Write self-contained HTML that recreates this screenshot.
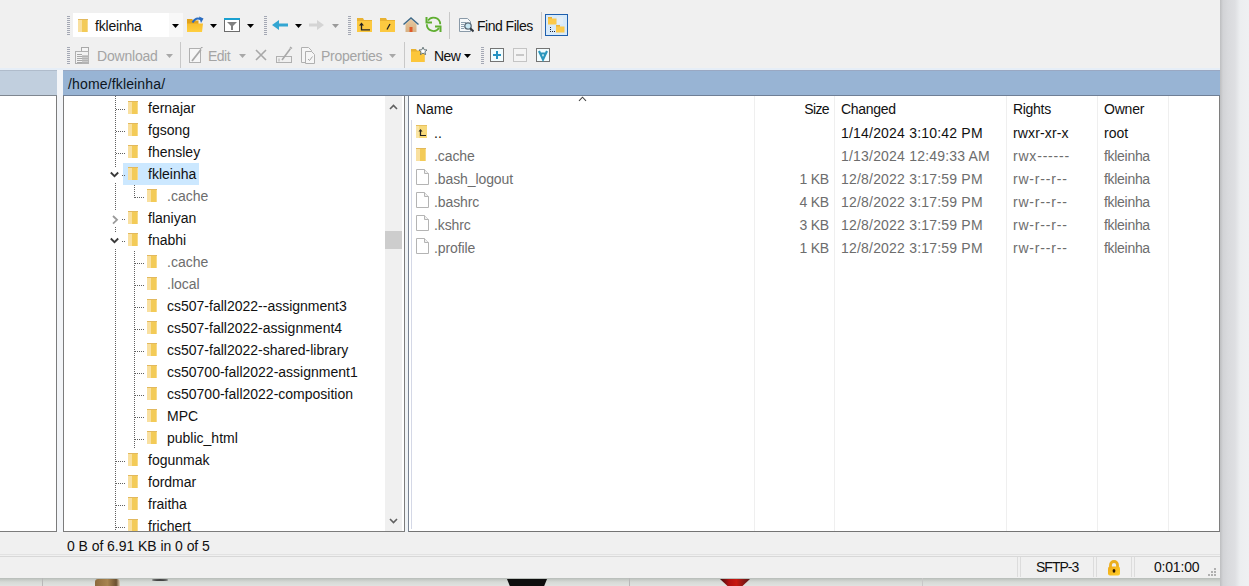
<!DOCTYPE html>
<html><head><meta charset="utf-8"><style>
html,body{margin:0;padding:0}
body{width:1249px;height:586px;position:relative;overflow:hidden;background:#eef0f2;font-family:"Liberation Sans",sans-serif;font-size:14px}
.t{position:absolute;white-space:pre;line-height:16px;font-family:"Liberation Sans",sans-serif}
.b{position:absolute;display:block}
.dv{position:absolute;width:1px;background:repeating-linear-gradient(to bottom,#606060 0 1px,transparent 1px 2px)}
.dh{position:absolute;height:1px;background:repeating-linear-gradient(to right,#606060 0 1px,transparent 1px 2px)}
</style></head><body>

<div class="b" style="left:0px;top:578px;width:1249px;height:8px;background:linear-gradient(to bottom,#b6bcb8,#c8ccc8 2px,#d6dad6 4px,#e0e2e0 8px)"></div>
<div class="b" style="left:1220px;top:0px;width:29px;height:586px;background:linear-gradient(to right,#bdbec0 0,#d2d3d6 3px,#d9dadd 8px,#dedfe2 15px,#eceef0 20px,#eff0f2 29px)"></div>
<div class="b" style="left:42px;top:578px;width:1px;height:8px;background:#b8b8b8"></div>
<div class="b" style="left:629px;top:578px;width:1px;height:8px;background:#b8b8b8"></div>
<div class="b" style="left:922px;top:578px;width:1px;height:8px;background:#c8c8c8"></div>
<div class="b" style="left:95px;top:579px;width:25px;height:7px;background:linear-gradient(to right,#8c6a3c,#a88450 50%,#6a5030 85%,#e0d0b8);border-radius:3px 3px 0 0"></div>
<div class="b" style="left:152px;top:579px;width:16px;height:2px;background:#444;border-radius:50%"></div>
<div class="b" style="left:507px;top:579px;width:40px;height:7px;background:#0e0e0e;clip-path:polygon(0 0,100% 0,93% 100%,7% 100%)"></div>
<div class="b" style="left:720px;top:579px;width:30px;height:7px;background:linear-gradient(to right,#3a1010,#b01010 30%,#c81810 55%,#501818);clip-path:polygon(0 0,100% 0,75% 100%,25% 100%)"></div>
<div class="b" style="left:0px;top:0px;width:1220px;height:578px;background:#f0f0f0"></div>
<div class="b" style="left:57px;top:68px;width:6px;height:464px;background:#f3f5f8"></div>
<div class="b" style="left:67px;top:16px;width:3px;height:20px;background:repeating-linear-gradient(to bottom,#a4a8b4 0 1px,transparent 1px 2px)"></div>
<div class="b" style="left:73px;top:13px;width:96px;height:24px;background:#fff"></div>
<div class="b" style="left:169px;top:13px;width:14px;height:24px;background:#f8f8f8"></div>
<svg class="b" style="left:78px;top:19px" width="10" height="13" viewBox="0 0 10 13"><rect x="0" y="0" width="10" height="13" fill="#f6d679"/><rect x="0" y="1" width="4" height="12" fill="#f9e0a0"/><rect x="4" y="1" width="5" height="12" fill="#f3cb58"/><rect x="9" y="1" width="1" height="12" fill="#f7da88"/><rect x="0" y="0" width="10" height="1" fill="#e2b95e"/></svg>
<div class="t" style="left:95px;top:18px;color:#111;font-size:14px;letter-spacing:-0.2px;">fkleinha</div>
<svg class="b" style="left:172px;top:24px" width="7" height="4" viewBox="0 0 7 4"><polygon points="0,0 7,0 3.5,4" fill="#000"/></svg>
<svg class="b" style="left:186px;top:16px" width="18" height="16" viewBox="0 0 18 16"><defs><linearGradient id="gof" x1="0" y1="0" x2="0" y2="1"><stop offset="0" stop-color="#f7bd2c"/><stop offset="1" stop-color="#ffcf40"/></linearGradient></defs><path d="M1 3 h5 l1.5 1.5 h5 v11.5 h-11.5z" fill="#e2a31c"/><path d="M1 7.5 h16 l-1 8.5 h-15z" fill="url(#gof)"/><path d="M6.5 6.5 Q10 0.5 15 3.5" stroke="#2a6cc0" stroke-width="2" fill="none"/><polygon points="13,0.5 17.5,2.5 15,7" fill="#2a6cc0"/></svg>
<svg class="b" style="left:210px;top:24px" width="7" height="4" viewBox="0 0 7 4"><polygon points="0,0 7,0 3.5,4" fill="#000"/></svg>
<svg class="b" style="left:223px;top:17px" width="18" height="15" viewBox="0 0 18 15"><rect x="1.5" y="1.5" width="15" height="13" fill="#fff" stroke="#6c6c6c"/><rect x="1" y="1" width="16" height="2" fill="#1aa0d0"/><path d="M4 5 h10 l-4 4 v4 h-2 v-4z" fill="#808080"/></svg>
<svg class="b" style="left:247px;top:24px" width="7" height="4" viewBox="0 0 7 4"><polygon points="0,0 7,0 3.5,4" fill="#000"/></svg>
<div class="b" style="left:264px;top:16px;width:3px;height:20px;background:repeating-linear-gradient(to bottom,#a4a8b4 0 1px,transparent 1px 2px)"></div>
<svg class="b" style="left:272px;top:20px" width="16" height="10" viewBox="0 0 16 10"><polygon points="0,5 7,0 7,3.5 16,3.5 16,6.5 7,6.5 7,10" fill="#33a6d2"/></svg>
<svg class="b" style="left:295px;top:24px" width="7" height="4" viewBox="0 0 7 4"><polygon points="0,0 7,0 3.5,4" fill="#000"/></svg>
<svg class="b" style="left:309px;top:20px" width="15" height="10" viewBox="0 0 15 10"><polygon points="15,5 8,0 8,3.5 0,3.5 0,6.5 8,6.5 8,10" fill="#d4d4d4"/></svg>
<svg class="b" style="left:332px;top:24px" width="7" height="4" viewBox="0 0 7 4"><polygon points="0,0 7,0 3.5,4" fill="#9a9a9a"/></svg>
<div class="b" style="left:348px;top:16px;width:3px;height:20px;background:repeating-linear-gradient(to bottom,#a4a8b4 0 1px,transparent 1px 2px)"></div>
<svg class="b" style="left:357px;top:18px" width="15" height="14" viewBox="0 0 15 14"><path d="M0 0 h6 l1 2 h8 v12 h-15z" fill="#e9b231"/><rect x="0" y="3" width="15" height="11" fill="#fcc940"/><path d="M4.5 6 v5.8 h8.5" stroke="#222" stroke-width="1.3" fill="none"/><polygon points="2,7.5 4.5,4.5 7,7.5" fill="#222"/></svg>
<svg class="b" style="left:380px;top:18px" width="15" height="14" viewBox="0 0 15 14"><path d="M0 0 h6 l1 2 h8 v12 h-15z" fill="#e9b231"/><rect x="0" y="3" width="15" height="11" fill="#fcc940"/><path d="M7 11.5 L10 6" stroke="#222" stroke-width="1.3"/></svg>
<svg class="b" style="left:403px;top:17px" width="16" height="15" viewBox="0 0 16 15"><defs><linearGradient id="ghm" x1="0" y1="0" x2="0" y2="1"><stop offset="0" stop-color="#e9c9a0"/><stop offset="1" stop-color="#d7b183"/></linearGradient></defs><polygon points="2.5,7 8,2 13.5,7 13.5,15 2.5,15" fill="url(#ghm)"/><path d="M0.5 7.5 L8 1 L15.5 7.5" stroke="#3f6a88" stroke-width="1.5" fill="none"/><rect x="6.5" y="10" width="3" height="5" fill="#e05a2a"/></svg>
<svg class="b" style="left:425px;top:16px" width="17" height="17" viewBox="0 0 17 17"><path d="M15.2 8.3 A6.7 6.7 0 0 0 3 4.5" stroke="#5fae30" stroke-width="1.8" fill="none"/><path d="M1.8 8.3 A6.7 6.7 0 0 0 14 12.1" stroke="#5fae30" stroke-width="1.8" fill="none"/><path d="M1.5 1 V6.5 H7" stroke="#5fae30" stroke-width="2" fill="none"/><path d="M10 10.5 H15.5 V16" stroke="#5fae30" stroke-width="2" fill="none"/></svg>
<div class="b" style="left:449px;top:12px;width:1px;height:27px;background:#c8c8c8"></div>
<svg class="b" style="left:458px;top:16px" width="16" height="17" viewBox="0 0 16 17"><path d="M1.5 2.5 h8 l3 3 v10 h-11z" fill="#f6f9fb" stroke="#8a9aa8"/><path d="M3 6.5 h5 M3 8.5 h3 M3 10.5 h3 M3 12.5 h3" stroke="#8ca0b0" stroke-width="1"/><circle cx="10" cy="10" r="3.2" fill="#c8e8f4" stroke="#5a6a78" stroke-width="1.3"/><path d="M12.2 12.2 L15.5 15.5" stroke="#303840" stroke-width="2"/></svg>
<div class="t" style="left:477px;top:18px;color:#111;font-size:14px;letter-spacing:-0.5px;">Find Files</div>
<div class="b" style="left:541px;top:12px;width:1px;height:27px;background:#c8c8c8"></div>
<div class="b" style="left:545px;top:14px;width:23px;height:22px;background:#d8eaf9;border:1.6px solid #1d5fae;box-sizing:border-box"></div>
<svg class="b" style="left:547px;top:16px" width="19" height="18" viewBox="0 0 19 18"><rect x="1" y="1" width="4" height="2" fill="#eab23a"/><rect x="1" y="2.5" width="8.5" height="6" fill="#fcc94a"/><rect x="9" y="9" width="4" height="2" fill="#eab23a"/><rect x="9" y="10.5" width="8.5" height="6" fill="#fcc94a"/><rect x="3" y="11" width="1" height="1" fill="#223"/><rect x="3" y="13" width="1" height="1" fill="#223"/><rect x="3" y="15" width="1" height="1" fill="#223"/><rect x="5" y="15" width="1" height="1" fill="#223"/><rect x="7" y="15" width="1" height="1" fill="#223"/><rect x="10" y="1" width="6" height="7" fill="#e4eef6"/></svg>
<div class="b" style="left:67px;top:47px;width:3px;height:18px;background:repeating-linear-gradient(to bottom,#a4a8b4 0 1px,transparent 1px 2px)"></div>
<svg class="b" style="left:75px;top:47px" width="15" height="17" viewBox="0 0 15 17"><rect x="6.5" y="0.5" width="7" height="9" fill="#f4f4f4" stroke="#a8a8a8"/><rect x="0.5" y="4.5" width="13" height="12" fill="#f2f2f2" stroke="#b0b0b0"/><path d="M2 7.5 h5 M2 9.5 h11 M2 11.5 h11 M2 13.5 h11 M2 15.5 h11" stroke="#a8a8a8"/><rect x="7" y="8" width="7" height="8.5" fill="#b8b8b8" opacity="0.7"/></svg>
<div class="t" style="left:97px;top:48px;color:#a4a4a4;font-size:14px;letter-spacing:-0.2px;">Download</div>
<svg class="b" style="left:166px;top:54px" width="7" height="4" viewBox="0 0 7 4"><polygon points="0,0 7,0 3.5,4" fill="#a8a8a8"/></svg>
<div class="b" style="left:180px;top:42px;width:1px;height:26px;background:#c8c8c8"></div>
<svg class="b" style="left:189px;top:47px" width="14" height="16" viewBox="0 0 14 16"><rect x="0.5" y="1.5" width="11" height="14" fill="#f6f6f6" stroke="#b0b0b0"/><path d="M3 14 L12 2.5" stroke="#a8a8a8" stroke-width="1.8"/><path d="M12 1 L13.5 0" stroke="#a8a8a8" stroke-width="1.4"/></svg>
<div class="t" style="left:208px;top:48px;color:#a4a4a4;font-size:14px;letter-spacing:-0.5px;">Edit</div>
<svg class="b" style="left:239px;top:54px" width="7" height="4" viewBox="0 0 7 4"><polygon points="0,0 7,0 3.5,4" fill="#a8a8a8"/></svg>
<svg class="b" style="left:255px;top:49px" width="12" height="12" viewBox="0 0 12 12"><path d="M1 1 L11 11 M11 1 L1 11" stroke="#a8a8a8" stroke-width="1.6"/></svg>
<svg class="b" style="left:276px;top:46px" width="17" height="17" viewBox="0 0 17 17"><rect x="0.5" y="10.5" width="15" height="6" stroke="#b0b0b0" fill="none"/><path d="M3 12.5 v3" stroke="#b0b0b0"/><path d="M6 14 L14.5 2.5" stroke="#a8a8a8" stroke-width="1.6"/><path d="M14 1 L16 2.5" stroke="#a8a8a8" stroke-width="1.4"/></svg>
<svg class="b" style="left:301px;top:47px" width="14" height="17" viewBox="0 0 14 17"><path d="M0.5 0.5 h7 l3 3 v12 h-10z" fill="#f6f6f6" stroke="#b0b0b0"/><path d="M4.5 4.5 h6 l3 3 v9 h-9z" fill="#f6f6f6" stroke="#b0b0b0"/><path d="M7 12 l1.5 1.5 l3 -4" stroke="#a8a8a8" fill="none"/></svg>
<div class="t" style="left:321px;top:48px;color:#a4a4a4;font-size:14px;letter-spacing:-0.25px;">Properties</div>
<svg class="b" style="left:389px;top:54px" width="7" height="4" viewBox="0 0 7 4"><polygon points="0,0 7,0 3.5,4" fill="#a8a8a8"/></svg>
<div class="b" style="left:404px;top:42px;width:1px;height:26px;background:#c8c8c8"></div>
<svg class="b" style="left:410px;top:46px" width="18" height="17" viewBox="0 0 18 17"><path d="M1 3 h5 l1 1.5 h7.5 v11.5 h-13.5z" fill="#e9b231"/><rect x="1" y="5.5" width="13.5" height="10.5" fill="#fcc63a"/><polygon points="13,1.2 14.2,3.8 17,4 14.9,5.8 15.6,8.6 13,7.1 10.4,8.6 11.1,5.8 9,4 11.8,3.8" fill="#fff" stroke="#56666a" stroke-width="0.9"/></svg>
<div class="t" style="left:434px;top:48px;color:#111;font-size:14px;letter-spacing:-0.6px;">New</div>
<svg class="b" style="left:464px;top:54px" width="7" height="4" viewBox="0 0 7 4"><polygon points="0,0 7,0 3.5,4" fill="#000"/></svg>
<div class="b" style="left:481px;top:47px;width:3px;height:18px;background:repeating-linear-gradient(to bottom,#a4a8b4 0 1px,transparent 1px 2px)"></div>
<svg class="b" style="left:490px;top:48px" width="14" height="14" viewBox="0 0 14 14"><rect x="0.5" y="0.5" width="13" height="13" fill="#f2fcfe" stroke="#747474"/><path d="M7 3 v8 M3 7 h8" stroke="#2592c2" stroke-width="2"/></svg>
<svg class="b" style="left:513px;top:48px" width="14" height="14" viewBox="0 0 14 14"><rect x="0.5" y="0.5" width="13" height="13" fill="#f4f4f4" stroke="#c4c4c4"/><path d="M3 7 h8" stroke="#c8c8c8" stroke-width="2"/></svg>
<svg class="b" style="left:536px;top:48px" width="14" height="14" viewBox="0 0 14 14"><rect x="0.5" y="0.5" width="13" height="13" fill="#f2fcfe" stroke="#747474"/><path d="M3 3 L7 11.5 L11 3 M4.2 5.5 h5.6" stroke="#2a96bc" stroke-width="2.2" fill="none"/></svg>
<div class="b" style="left:0px;top:68px;width:1220px;height:2px;background:#e6eef7"></div>
<div class="b" style="left:0px;top:70px;width:57px;height:25px;background:#c1cfde;border-top:1px solid #b0bccb;box-sizing:border-box"></div>
<div class="b" style="left:0px;top:95px;width:57px;height:1px;background:#7f8790"></div>
<div class="b" style="left:63px;top:70px;width:1157px;height:25px;background:#98b4d4;border-top:1px solid #9aa8c2;box-sizing:border-box"></div>
<div class="b" style="left:63px;top:95px;width:1157px;height:1px;background:#6f7f96"></div>
<div class="t" style="left:68px;top:76px;color:#0c1420;font-size:14px;letter-spacing:0.15px;">/home/fkleinha/</div>
<div class="b" style="left:0px;top:96px;width:57px;height:436px;background:#fff;border-right:1px solid #7c7c7c;border-bottom:1px solid #7c7c7c;box-sizing:border-box"></div>
<div class="b" style="left:63px;top:96px;width:342px;height:436px;background:#fff;border-left:1px solid #7c7c7c;border-right:1px solid #7c7c7c;border-bottom:1px solid #7c7c7c;box-sizing:border-box"></div>
<div class="b" style="left:385px;top:96px;width:17px;height:435px;background:#f0f0f0"></div>
<svg class="b" style="left:389px;top:104px" width="9" height="6" viewBox="0 0 9 6"><path d="M1 5 L4.5 1.5 L8 5" stroke="#606060" stroke-width="1.6" fill="none"/></svg>
<svg class="b" style="left:389px;top:518px" width="9" height="6" viewBox="0 0 9 6"><path d="M1 1 L4.5 4.5 L8 1" stroke="#606060" stroke-width="1.6" fill="none"/></svg>
<div class="b" style="left:385px;top:231px;width:17px;height:18px;background:#cdcdcd"></div>
<div class="b" style="left:64px;top:96px;width:321px;height:435px;overflow:hidden">
<div class="b" style="left:59px;top:67px;width:76px;height:22px;background:#cce8ff"></div>
<div class="dv" style="left:51px;top:0px;height:71px"></div>
<div class="dv" style="left:51px;top:87px;height:28px"></div>
<div class="dv" style="left:51px;top:131px;height:6px"></div>
<div class="dv" style="left:51px;top:153px;height:282px"></div>
<div class="dv" style="left:70px;top:89px;height:13px"></div>
<div class="dv" style="left:70px;top:155px;height:198px"></div>
<div class="dh" style="left:52px;top:13px;width:9px"></div>
<svg class="b" style="left:64px;top:5px" width="10" height="13" viewBox="0 0 10 13"><rect x="0" y="0" width="10" height="13" fill="#f6d679"/><rect x="0" y="1" width="4" height="12" fill="#f9e0a0"/><rect x="4" y="1" width="5" height="12" fill="#f3cb58"/><rect x="9" y="1" width="1" height="12" fill="#f7da88"/><rect x="0" y="0" width="10" height="1" fill="#e2b95e"/></svg>
<div class="t" style="left:84px;top:4px;color:#111;letter-spacing:0px">fernajar</div>
<div class="dh" style="left:52px;top:35px;width:9px"></div>
<svg class="b" style="left:64px;top:27px" width="10" height="13" viewBox="0 0 10 13"><rect x="0" y="0" width="10" height="13" fill="#f6d679"/><rect x="0" y="1" width="4" height="12" fill="#f9e0a0"/><rect x="4" y="1" width="5" height="12" fill="#f3cb58"/><rect x="9" y="1" width="1" height="12" fill="#f7da88"/><rect x="0" y="0" width="10" height="1" fill="#e2b95e"/></svg>
<div class="t" style="left:84px;top:26px;color:#111;letter-spacing:0px">fgsong</div>
<div class="dh" style="left:52px;top:57px;width:9px"></div>
<svg class="b" style="left:64px;top:49px" width="10" height="13" viewBox="0 0 10 13"><rect x="0" y="0" width="10" height="13" fill="#f6d679"/><rect x="0" y="1" width="4" height="12" fill="#f9e0a0"/><rect x="4" y="1" width="5" height="12" fill="#f3cb58"/><rect x="9" y="1" width="1" height="12" fill="#f7da88"/><rect x="0" y="0" width="10" height="1" fill="#e2b95e"/></svg>
<div class="t" style="left:84px;top:48px;color:#111;letter-spacing:0px">fhensley</div>
<svg class="b" style="left:46px;top:75px" width="9" height="7" viewBox="0 0 9 7"><path d="M0.8 1.5 L4.5 5.2 L8.2 1.5" stroke="#383838" stroke-width="1.8" fill="none"/></svg>
<div class="dh" style="left:58px;top:79px;width:3px"></div>
<svg class="b" style="left:64px;top:71px" width="10" height="13" viewBox="0 0 10 13"><rect x="0" y="0" width="10" height="13" fill="#f6d679"/><rect x="0" y="1" width="4" height="12" fill="#f9e0a0"/><rect x="4" y="1" width="5" height="12" fill="#f3cb58"/><rect x="9" y="1" width="1" height="12" fill="#f7da88"/><rect x="0" y="0" width="10" height="1" fill="#e2b95e"/></svg>
<div class="t" style="left:84px;top:70px;color:#111;letter-spacing:0px">fkleinha</div>
<div class="dh" style="left:71px;top:101px;width:9px"></div>
<svg class="b" style="left:83px;top:93px" width="10" height="13" viewBox="0 0 10 13"><rect x="0" y="0" width="10" height="13" fill="#f6d679"/><rect x="0" y="1" width="4" height="12" fill="#f9e0a0"/><rect x="4" y="1" width="5" height="12" fill="#f3cb58"/><rect x="9" y="1" width="1" height="12" fill="#f7da88"/><rect x="0" y="0" width="10" height="1" fill="#e2b95e"/></svg>
<div class="t" style="left:103px;top:92px;color:#6d6d6d;letter-spacing:0px">.cache</div>
<svg class="b" style="left:48px;top:119px" width="7" height="10" viewBox="0 0 7 10"><path d="M1 1 L5 4.8 L1 8.6" stroke="#9a9a9a" stroke-width="1.8" fill="none"/></svg>
<div class="dh" style="left:58px;top:123px;width:3px"></div>
<svg class="b" style="left:64px;top:115px" width="10" height="13" viewBox="0 0 10 13"><rect x="0" y="0" width="10" height="13" fill="#f6d679"/><rect x="0" y="1" width="4" height="12" fill="#f9e0a0"/><rect x="4" y="1" width="5" height="12" fill="#f3cb58"/><rect x="9" y="1" width="1" height="12" fill="#f7da88"/><rect x="0" y="0" width="10" height="1" fill="#e2b95e"/></svg>
<div class="t" style="left:84px;top:114px;color:#111;letter-spacing:0px">flaniyan</div>
<svg class="b" style="left:46px;top:141px" width="9" height="7" viewBox="0 0 9 7"><path d="M0.8 1.5 L4.5 5.2 L8.2 1.5" stroke="#383838" stroke-width="1.8" fill="none"/></svg>
<div class="dh" style="left:58px;top:145px;width:3px"></div>
<svg class="b" style="left:64px;top:137px" width="10" height="13" viewBox="0 0 10 13"><rect x="0" y="0" width="10" height="13" fill="#f6d679"/><rect x="0" y="1" width="4" height="12" fill="#f9e0a0"/><rect x="4" y="1" width="5" height="12" fill="#f3cb58"/><rect x="9" y="1" width="1" height="12" fill="#f7da88"/><rect x="0" y="0" width="10" height="1" fill="#e2b95e"/></svg>
<div class="t" style="left:84px;top:136px;color:#111;letter-spacing:0px">fnabhi</div>
<div class="dh" style="left:71px;top:167px;width:9px"></div>
<svg class="b" style="left:83px;top:159px" width="10" height="13" viewBox="0 0 10 13"><rect x="0" y="0" width="10" height="13" fill="#f6d679"/><rect x="0" y="1" width="4" height="12" fill="#f9e0a0"/><rect x="4" y="1" width="5" height="12" fill="#f3cb58"/><rect x="9" y="1" width="1" height="12" fill="#f7da88"/><rect x="0" y="0" width="10" height="1" fill="#e2b95e"/></svg>
<div class="t" style="left:103px;top:158px;color:#6d6d6d;letter-spacing:0px">.cache</div>
<div class="dh" style="left:71px;top:189px;width:9px"></div>
<svg class="b" style="left:83px;top:181px" width="10" height="13" viewBox="0 0 10 13"><rect x="0" y="0" width="10" height="13" fill="#f6d679"/><rect x="0" y="1" width="4" height="12" fill="#f9e0a0"/><rect x="4" y="1" width="5" height="12" fill="#f3cb58"/><rect x="9" y="1" width="1" height="12" fill="#f7da88"/><rect x="0" y="0" width="10" height="1" fill="#e2b95e"/></svg>
<div class="t" style="left:103px;top:180px;color:#6d6d6d;letter-spacing:0px">.local</div>
<div class="dh" style="left:71px;top:211px;width:9px"></div>
<svg class="b" style="left:83px;top:203px" width="10" height="13" viewBox="0 0 10 13"><rect x="0" y="0" width="10" height="13" fill="#f6d679"/><rect x="0" y="1" width="4" height="12" fill="#f9e0a0"/><rect x="4" y="1" width="5" height="12" fill="#f3cb58"/><rect x="9" y="1" width="1" height="12" fill="#f7da88"/><rect x="0" y="0" width="10" height="1" fill="#e2b95e"/></svg>
<div class="t" style="left:103px;top:202px;color:#111;letter-spacing:0px">cs507-fall2022--assignment3</div>
<div class="dh" style="left:71px;top:233px;width:9px"></div>
<svg class="b" style="left:83px;top:225px" width="10" height="13" viewBox="0 0 10 13"><rect x="0" y="0" width="10" height="13" fill="#f6d679"/><rect x="0" y="1" width="4" height="12" fill="#f9e0a0"/><rect x="4" y="1" width="5" height="12" fill="#f3cb58"/><rect x="9" y="1" width="1" height="12" fill="#f7da88"/><rect x="0" y="0" width="10" height="1" fill="#e2b95e"/></svg>
<div class="t" style="left:103px;top:224px;color:#111;letter-spacing:0px">cs507-fall2022-assignment4</div>
<div class="dh" style="left:71px;top:255px;width:9px"></div>
<svg class="b" style="left:83px;top:247px" width="10" height="13" viewBox="0 0 10 13"><rect x="0" y="0" width="10" height="13" fill="#f6d679"/><rect x="0" y="1" width="4" height="12" fill="#f9e0a0"/><rect x="4" y="1" width="5" height="12" fill="#f3cb58"/><rect x="9" y="1" width="1" height="12" fill="#f7da88"/><rect x="0" y="0" width="10" height="1" fill="#e2b95e"/></svg>
<div class="t" style="left:103px;top:246px;color:#111;letter-spacing:0px">cs507-fall2022-shared-library</div>
<div class="dh" style="left:71px;top:277px;width:9px"></div>
<svg class="b" style="left:83px;top:269px" width="10" height="13" viewBox="0 0 10 13"><rect x="0" y="0" width="10" height="13" fill="#f6d679"/><rect x="0" y="1" width="4" height="12" fill="#f9e0a0"/><rect x="4" y="1" width="5" height="12" fill="#f3cb58"/><rect x="9" y="1" width="1" height="12" fill="#f7da88"/><rect x="0" y="0" width="10" height="1" fill="#e2b95e"/></svg>
<div class="t" style="left:103px;top:268px;color:#111;letter-spacing:0px">cs50700-fall2022-assignment1</div>
<div class="dh" style="left:71px;top:299px;width:9px"></div>
<svg class="b" style="left:83px;top:291px" width="10" height="13" viewBox="0 0 10 13"><rect x="0" y="0" width="10" height="13" fill="#f6d679"/><rect x="0" y="1" width="4" height="12" fill="#f9e0a0"/><rect x="4" y="1" width="5" height="12" fill="#f3cb58"/><rect x="9" y="1" width="1" height="12" fill="#f7da88"/><rect x="0" y="0" width="10" height="1" fill="#e2b95e"/></svg>
<div class="t" style="left:103px;top:290px;color:#111;letter-spacing:0px">cs50700-fall2022-composition</div>
<div class="dh" style="left:71px;top:321px;width:9px"></div>
<svg class="b" style="left:83px;top:313px" width="10" height="13" viewBox="0 0 10 13"><rect x="0" y="0" width="10" height="13" fill="#f6d679"/><rect x="0" y="1" width="4" height="12" fill="#f9e0a0"/><rect x="4" y="1" width="5" height="12" fill="#f3cb58"/><rect x="9" y="1" width="1" height="12" fill="#f7da88"/><rect x="0" y="0" width="10" height="1" fill="#e2b95e"/></svg>
<div class="t" style="left:103px;top:312px;color:#111;letter-spacing:0px">MPC</div>
<div class="dh" style="left:71px;top:343px;width:9px"></div>
<svg class="b" style="left:83px;top:335px" width="10" height="13" viewBox="0 0 10 13"><rect x="0" y="0" width="10" height="13" fill="#f6d679"/><rect x="0" y="1" width="4" height="12" fill="#f9e0a0"/><rect x="4" y="1" width="5" height="12" fill="#f3cb58"/><rect x="9" y="1" width="1" height="12" fill="#f7da88"/><rect x="0" y="0" width="10" height="1" fill="#e2b95e"/></svg>
<div class="t" style="left:103px;top:334px;color:#111;letter-spacing:0px">public_html</div>
<div class="dh" style="left:52px;top:365px;width:9px"></div>
<svg class="b" style="left:64px;top:357px" width="10" height="13" viewBox="0 0 10 13"><rect x="0" y="0" width="10" height="13" fill="#f6d679"/><rect x="0" y="1" width="4" height="12" fill="#f9e0a0"/><rect x="4" y="1" width="5" height="12" fill="#f3cb58"/><rect x="9" y="1" width="1" height="12" fill="#f7da88"/><rect x="0" y="0" width="10" height="1" fill="#e2b95e"/></svg>
<div class="t" style="left:84px;top:356px;color:#111;letter-spacing:0px">fogunmak</div>
<div class="dh" style="left:52px;top:387px;width:9px"></div>
<svg class="b" style="left:64px;top:379px" width="10" height="13" viewBox="0 0 10 13"><rect x="0" y="0" width="10" height="13" fill="#f6d679"/><rect x="0" y="1" width="4" height="12" fill="#f9e0a0"/><rect x="4" y="1" width="5" height="12" fill="#f3cb58"/><rect x="9" y="1" width="1" height="12" fill="#f7da88"/><rect x="0" y="0" width="10" height="1" fill="#e2b95e"/></svg>
<div class="t" style="left:84px;top:378px;color:#111;letter-spacing:0px">fordmar</div>
<div class="dh" style="left:52px;top:409px;width:9px"></div>
<svg class="b" style="left:64px;top:401px" width="10" height="13" viewBox="0 0 10 13"><rect x="0" y="0" width="10" height="13" fill="#f6d679"/><rect x="0" y="1" width="4" height="12" fill="#f9e0a0"/><rect x="4" y="1" width="5" height="12" fill="#f3cb58"/><rect x="9" y="1" width="1" height="12" fill="#f7da88"/><rect x="0" y="0" width="10" height="1" fill="#e2b95e"/></svg>
<div class="t" style="left:84px;top:400px;color:#111;letter-spacing:0px">fraitha</div>
<div class="dh" style="left:52px;top:431px;width:9px"></div>
<svg class="b" style="left:64px;top:423px" width="10" height="13" viewBox="0 0 10 13"><rect x="0" y="0" width="10" height="13" fill="#f6d679"/><rect x="0" y="1" width="4" height="12" fill="#f9e0a0"/><rect x="4" y="1" width="5" height="12" fill="#f3cb58"/><rect x="9" y="1" width="1" height="12" fill="#f7da88"/><rect x="0" y="0" width="10" height="1" fill="#e2b95e"/></svg>
<div class="t" style="left:84px;top:422px;color:#111;letter-spacing:0px">frichert</div>
</div>
<div class="b" style="left:405px;top:96px;width:3px;height:436px;background:#eff3f6"></div>
<div class="b" style="left:408px;top:96px;width:812px;height:436px;background:#fff;border-left:1px solid #7a8494;border-bottom:1px solid #747474;border-right:1px solid #7e7e7e;box-sizing:border-box"></div>
<div class="b" style="left:754px;top:96px;width:1px;height:435px;background:#efefef"></div>
<div class="b" style="left:834px;top:96px;width:1px;height:435px;background:#efefef"></div>
<div class="b" style="left:1006px;top:96px;width:1px;height:435px;background:#efefef"></div>
<div class="b" style="left:1097px;top:96px;width:1px;height:435px;background:#efefef"></div>
<div class="b" style="left:1168px;top:96px;width:1px;height:435px;background:#efefef"></div>
<div class="b" style="left:411px;top:120px;width:1px;height:409px;background:#d4d8e6"></div>
<svg class="b" style="left:578px;top:96px" width="9" height="6" viewBox="0 0 9 6"><path d="M1 4.8 L4.5 1.2 L8 4.8" stroke="#454545" stroke-width="1.1" fill="none"/></svg>
<div class="t" style="left:416px;top:101px;color:#111;font-size:14px;letter-spacing:-0.1px;">Name</div>
<div class="t" style="right:420px;top:101px;color:#111;letter-spacing:-0.6px;text-align:right">Size</div>
<div class="t" style="left:841px;top:101px;color:#111;font-size:14px;letter-spacing:-0.3px;">Changed</div>
<div class="t" style="left:1013px;top:101px;color:#111;font-size:14px;letter-spacing:-0.3px;">Rights</div>
<div class="t" style="left:1104px;top:101px;color:#111;font-size:14px;letter-spacing:-0.2px;">Owner</div>
<svg class="b" style="left:416px;top:125px" width="11" height="13" viewBox="0 0 11 13"><rect x="0" y="0" width="11" height="13" fill="#f7d97a"/><rect x="0" y="0" width="11" height="1" fill="#e7c060"/><rect x="0" y="1" width="3" height="12" fill="#f9e4a4"/><path d="M4.5 5.5 v5 h5.5" stroke="#222" stroke-width="1.2" fill="none"/><polygon points="2.5,6.5 4.5,4 6.5,6.5" fill="#222"/></svg>
<div class="t" style="left:434px;top:125px;color:#111;font-size:14px;letter-spacing:0px;">..</div>
<div class="t" style="left:841px;top:125px;color:#111;font-size:14px;letter-spacing:0.2px;">1/14/2024 3:10:42 PM</div>
<div class="t" style="left:1013px;top:125px;color:#111;font-size:14px;letter-spacing:0.15px;">rwxr-xr-x</div>
<div class="t" style="left:1104px;top:125px;color:#111;font-size:14px;letter-spacing:0px;">root</div>
<svg class="b" style="left:416px;top:148px" width="10" height="13" viewBox="0 0 10 13"><rect x="0" y="0" width="10" height="13" fill="#f6d679"/><rect x="0" y="1" width="4" height="12" fill="#f9e0a0"/><rect x="4" y="1" width="5" height="12" fill="#f3cb58"/><rect x="9" y="1" width="1" height="12" fill="#f7da88"/><rect x="0" y="0" width="10" height="1" fill="#e2b95e"/></svg>
<div class="t" style="left:434px;top:148px;color:#6d6d6d;font-size:14px;letter-spacing:-0.1px;">.cache</div>
<div class="t" style="left:841px;top:148px;color:#6d6d6d;font-size:14px;letter-spacing:0.2px;">1/13/2024 12:49:33 AM</div>
<div class="t" style="left:1013px;top:148px;color:#6d6d6d;font-size:14px;letter-spacing:0.8px;">rwx------</div>
<div class="t" style="left:1104px;top:148px;color:#6d6d6d;font-size:14px;letter-spacing:-0.3px;">fkleinha</div>
<svg class="b" style="left:416px;top:169px" width="13" height="16" viewBox="0 0 13 16"><path d="M0.5 0.5 h8 l4 4 v11 h-12z" fill="#fff" stroke="#b4b4b4"/><path d="M8.5 0.5 v4 h4" fill="#f0f0f0" stroke="#b4b4b4"/></svg>
<div class="t" style="left:434px;top:171px;color:#6d6d6d;font-size:14px;letter-spacing:-0.1px;">.bash_logout</div>
<div class="t" style="right:420px;top:171px;color:#6d6d6d;letter-spacing:-0.2px;text-align:right">1 KB</div>
<div class="t" style="left:841px;top:171px;color:#6d6d6d;font-size:14px;letter-spacing:0.2px;">12/8/2022 3:17:59 PM</div>
<div class="t" style="left:1013px;top:171px;color:#6d6d6d;font-size:14px;letter-spacing:0.8px;">rw-r--r--</div>
<div class="t" style="left:1104px;top:171px;color:#6d6d6d;font-size:14px;letter-spacing:-0.3px;">fkleinha</div>
<svg class="b" style="left:416px;top:192px" width="13" height="16" viewBox="0 0 13 16"><path d="M0.5 0.5 h8 l4 4 v11 h-12z" fill="#fff" stroke="#b4b4b4"/><path d="M8.5 0.5 v4 h4" fill="#f0f0f0" stroke="#b4b4b4"/></svg>
<div class="t" style="left:434px;top:194px;color:#6d6d6d;font-size:14px;letter-spacing:-0.1px;">.bashrc</div>
<div class="t" style="right:420px;top:194px;color:#6d6d6d;letter-spacing:-0.2px;text-align:right">4 KB</div>
<div class="t" style="left:841px;top:194px;color:#6d6d6d;font-size:14px;letter-spacing:0.2px;">12/8/2022 3:17:59 PM</div>
<div class="t" style="left:1013px;top:194px;color:#6d6d6d;font-size:14px;letter-spacing:0.8px;">rw-r--r--</div>
<div class="t" style="left:1104px;top:194px;color:#6d6d6d;font-size:14px;letter-spacing:-0.3px;">fkleinha</div>
<svg class="b" style="left:416px;top:215px" width="13" height="16" viewBox="0 0 13 16"><path d="M0.5 0.5 h8 l4 4 v11 h-12z" fill="#fff" stroke="#b4b4b4"/><path d="M8.5 0.5 v4 h4" fill="#f0f0f0" stroke="#b4b4b4"/></svg>
<div class="t" style="left:434px;top:217px;color:#6d6d6d;font-size:14px;letter-spacing:-0.1px;">.kshrc</div>
<div class="t" style="right:420px;top:217px;color:#6d6d6d;letter-spacing:-0.2px;text-align:right">3 KB</div>
<div class="t" style="left:841px;top:217px;color:#6d6d6d;font-size:14px;letter-spacing:0.2px;">12/8/2022 3:17:59 PM</div>
<div class="t" style="left:1013px;top:217px;color:#6d6d6d;font-size:14px;letter-spacing:0.8px;">rw-r--r--</div>
<div class="t" style="left:1104px;top:217px;color:#6d6d6d;font-size:14px;letter-spacing:-0.3px;">fkleinha</div>
<svg class="b" style="left:416px;top:238px" width="13" height="16" viewBox="0 0 13 16"><path d="M0.5 0.5 h8 l4 4 v11 h-12z" fill="#fff" stroke="#b4b4b4"/><path d="M8.5 0.5 v4 h4" fill="#f0f0f0" stroke="#b4b4b4"/></svg>
<div class="t" style="left:434px;top:240px;color:#6d6d6d;font-size:14px;letter-spacing:-0.1px;">.profile</div>
<div class="t" style="right:420px;top:240px;color:#6d6d6d;letter-spacing:-0.2px;text-align:right">1 KB</div>
<div class="t" style="left:841px;top:240px;color:#6d6d6d;font-size:14px;letter-spacing:0.2px;">12/8/2022 3:17:59 PM</div>
<div class="t" style="left:1013px;top:240px;color:#6d6d6d;font-size:14px;letter-spacing:0.8px;">rw-r--r--</div>
<div class="t" style="left:1104px;top:240px;color:#6d6d6d;font-size:14px;letter-spacing:-0.3px;">fkleinha</div>
<div class="t" style="left:67px;top:538px;color:#111;font-size:14px;letter-spacing:-0.05px;">0 B of 6.91 KB in 0 of 5</div>
<div class="b" style="left:0px;top:554px;width:1220px;height:1px;background:#e2e2e2"></div>
<div class="b" style="left:0px;top:556px;width:1220px;height:1px;background:#d8d8d8"></div>
<div class="b" style="left:1017px;top:557px;width:1px;height:20px;background:#dcdcdc"></div>
<div class="b" style="left:1020px;top:557px;width:1px;height:20px;background:#dcdcdc"></div>
<div class="b" style="left:1093px;top:557px;width:1px;height:20px;background:#dcdcdc"></div>
<div class="b" style="left:1096px;top:557px;width:1px;height:20px;background:#dcdcdc"></div>
<div class="b" style="left:1131px;top:557px;width:1px;height:20px;background:#dcdcdc"></div>
<div class="b" style="left:1134px;top:557px;width:1px;height:20px;background:#dcdcdc"></div>
<div class="t" style="left:1036px;top:559px;color:#111;font-size:14px;letter-spacing:-1.0px;">SFTP-3</div>
<svg class="b" style="left:1107px;top:559px" width="14" height="17" viewBox="0 0 14 17"><defs><linearGradient id="glk" x1="0" y1="0" x2="1" y2="1"><stop offset="0" stop-color="#f0a818"/><stop offset="1" stop-color="#ffd028"/></linearGradient></defs><path d="M3.5 8.5 V6 A3.5 3.5 0 0 1 10.5 6 V8.5" stroke="#eaae20" stroke-width="2.8" fill="none"/><rect x="1" y="7.5" width="12" height="9" rx="2" fill="url(#glk)"/><ellipse cx="7" cy="11.8" rx="1.4" ry="1.9" fill="#2a1800"/></svg>
<div class="t" style="left:1154px;top:559px;color:#111;font-size:14px;letter-spacing:-0.2px;">0:01:00</div>
<div class="b" style="left:1214px;top:568px;width:2px;height:2px;background:#b0b0b0"></div>
<div class="b" style="left:1211px;top:571px;width:2px;height:2px;background:#b0b0b0"></div>
<div class="b" style="left:1214px;top:571px;width:2px;height:2px;background:#b0b0b0"></div>
<div class="b" style="left:1208px;top:574px;width:2px;height:2px;background:#b0b0b0"></div>
<div class="b" style="left:1211px;top:574px;width:2px;height:2px;background:#b0b0b0"></div>
<div class="b" style="left:1214px;top:574px;width:2px;height:2px;background:#b0b0b0"></div>
</body></html>
